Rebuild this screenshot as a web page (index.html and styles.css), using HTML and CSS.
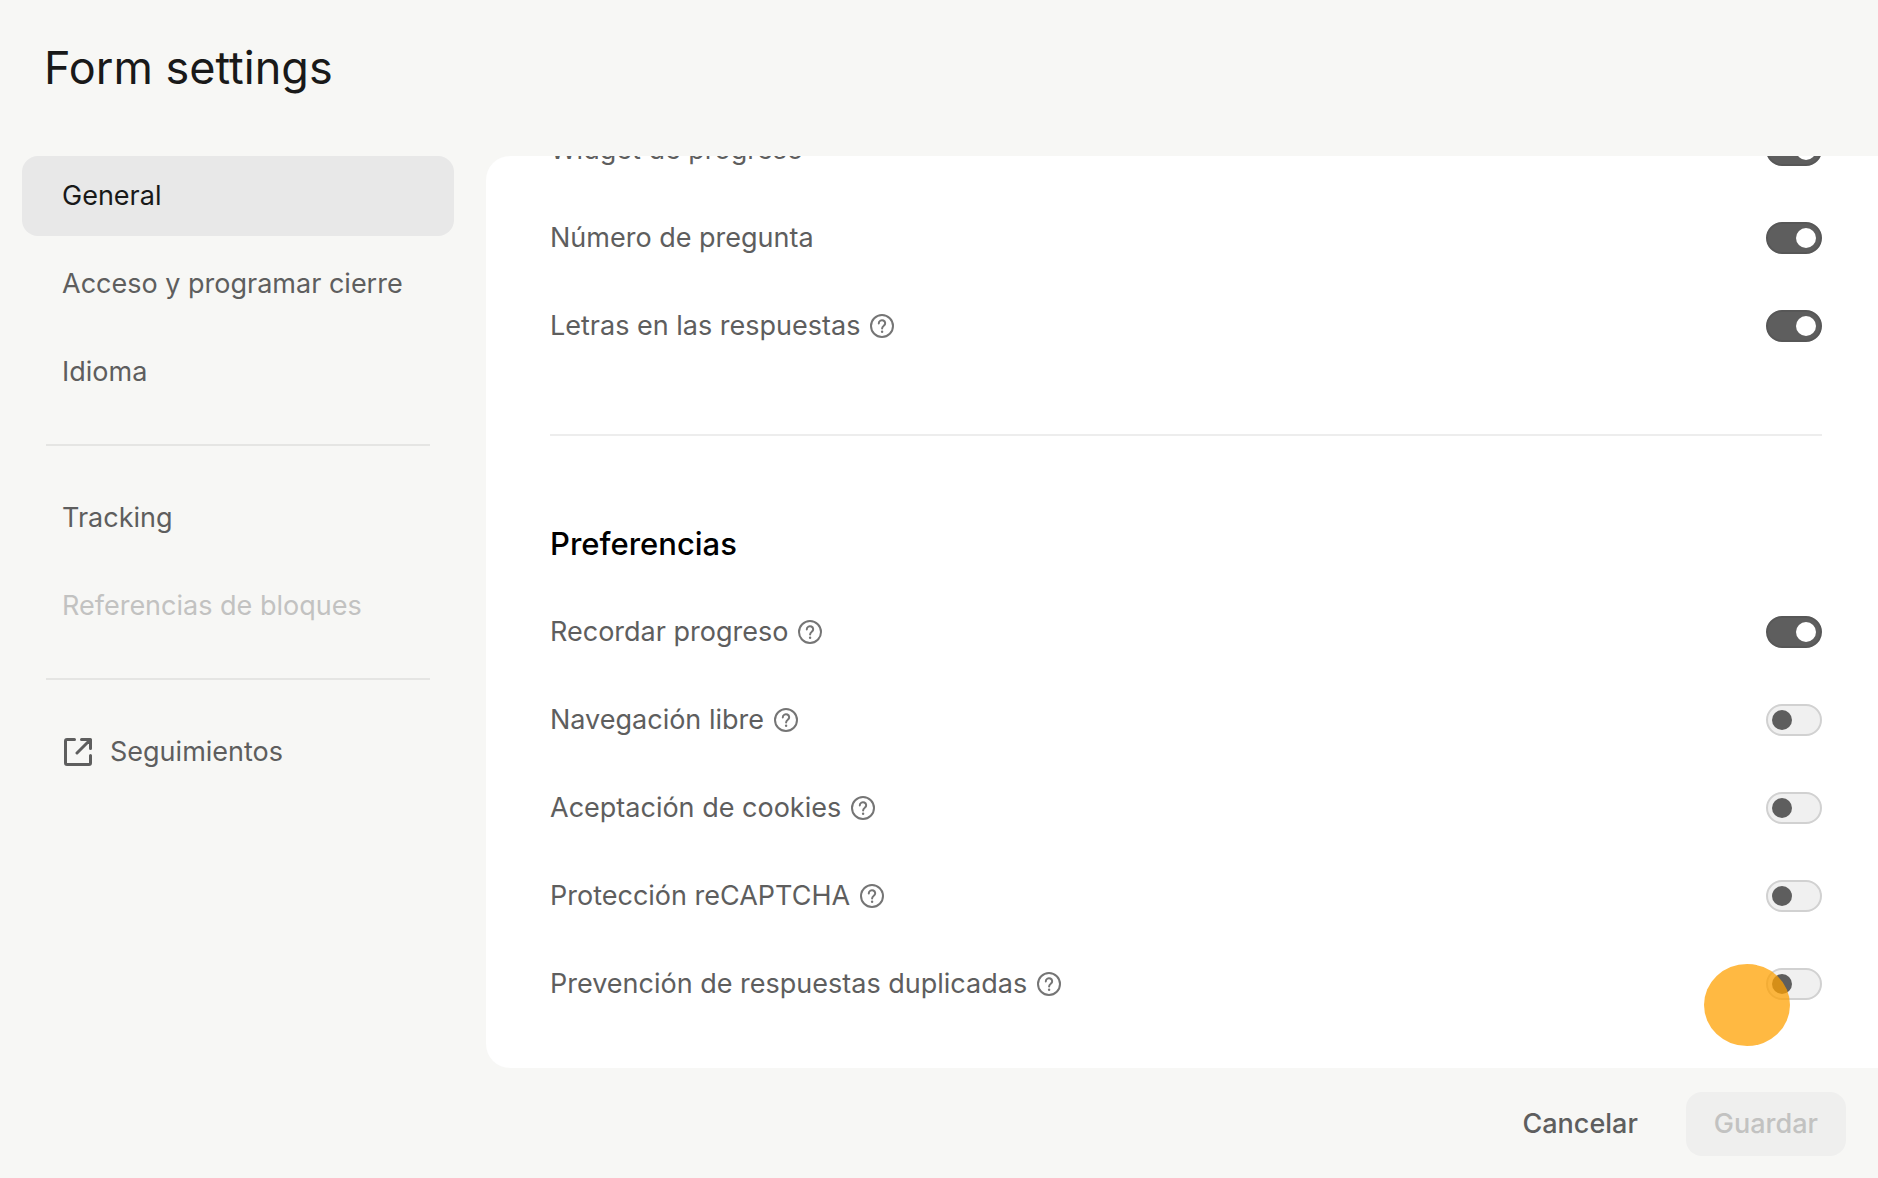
FILE: index.html
```html
<!DOCTYPE html>
<html lang="es">
<head>
    <meta charset="UTF-8">
    <meta name="viewport" content="width=device-width, initial-scale=1.0">
    <title>Form settings</title>
    <link rel="stylesheet" href="styles.css">
</head>
<body>

<!-- shared icons -->
<svg class="sprite" aria-hidden="true">
    <symbol id="icon-help" viewBox="0 0 24 24">
        <circle cx="12" cy="12" r="11" fill="none" stroke="currentColor" stroke-width="2"/>
        <path d="M8.8 9.4a3.2 3 0 1 1 5 2.3c-1.1.8-1.7 1.3-1.7 2.7" fill="none" stroke="currentColor" stroke-width="2" stroke-linecap="round"/>
        <circle cx="12.1" cy="17.7" r="1.2" fill="currentColor"/>
    </symbol>
    <symbol id="icon-external" viewBox="0 0 32 32">
        <path d="M12.500 3.500H5A1.500 1.500 0 0 0 3.500 5v22A1.500 1.500 0 0 0 5 28.500h22a1.500 1.500 0 0 0 1.500-1.500v-7.500M19.500 3.500h9v9M28 4L15 17" fill="none" stroke="currentColor" stroke-width="3" stroke-linecap="round" stroke-linejoin="round"/>
    </symbol>
</svg>

<div class="settings">
    <header class="header">
        <h1 class="title">Form settings</h1>
    </header>

    <div class="body">
        <nav class="sidebar">
            <a href="#general" class="nav-item active">General</a>
            <a href="#acceso" class="nav-item">Acceso y programar cierre</a>
            <a href="#idioma" class="nav-item">Idioma</a>
            <hr class="nav-divider">
            <a href="#tracking" class="nav-item">Tracking</a>
            <a href="#referencias" class="nav-item disabled" aria-disabled="true">Referencias de bloques</a>
            <hr class="nav-divider">
            <a href="#seguimientos" class="nav-item">
                <svg class="nav-icon" aria-hidden="true"><use href="#icon-external"/></svg>
                Seguimientos
            </a>
        </nav>

        <main class="panel">
            <div class="panel-content">
                <div class="row">
                    <label for="widget">Widget de progreso</label>
                    <input type="checkbox" role="switch" class="toggle" id="widget" checked>
                </div>
                <div class="row">
                    <label for="numero">Número de pregunta</label>
                    <input type="checkbox" role="switch" class="toggle" id="numero" checked>
                </div>
                <div class="row">
                    <label for="letras">Letras en las respuestas</label>
                    <button type="button" class="help" aria-label="Ayuda"><svg><use href="#icon-help"/></svg></button>
                    <input type="checkbox" role="switch" class="toggle" id="letras" checked>
                </div>

                <hr class="panel-divider">

                <h2 class="section-title">Preferencias</h2>
                <div class="row">
                    <label for="recordar">Recordar progreso</label>
                    <button type="button" class="help" aria-label="Ayuda"><svg><use href="#icon-help"/></svg></button>
                    <input type="checkbox" role="switch" class="toggle" id="recordar" checked>
                </div>
                <div class="row">
                    <label for="navegacion">Navegación libre</label>
                    <button type="button" class="help" aria-label="Ayuda"><svg><use href="#icon-help"/></svg></button>
                    <input type="checkbox" role="switch" class="toggle" id="navegacion">
                </div>
                <div class="row">
                    <label for="cookies">Aceptación de cookies</label>
                    <button type="button" class="help" aria-label="Ayuda"><svg><use href="#icon-help"/></svg></button>
                    <input type="checkbox" role="switch" class="toggle" id="cookies">
                </div>
                <div class="row">
                    <label for="recaptcha">Protección reCAPTCHA</label>
                    <button type="button" class="help" aria-label="Ayuda"><svg><use href="#icon-help"/></svg></button>
                    <input type="checkbox" role="switch" class="toggle" id="recaptcha">
                </div>
                <div class="row">
                    <label for="duplicadas">Prevención de respuestas duplicadas</label>
                    <button type="button" class="help" aria-label="Ayuda"><svg><use href="#icon-help"/></svg></button>
                    <input type="checkbox" role="switch" class="toggle" id="duplicadas">
                    <span class="pointer"></span>
                </div>
            </div>
        </main>
    </div>

    <footer class="footer">
        <button type="button" class="btn">Cancelar</button>
        <button type="button" class="btn btn-save" disabled>Guardar</button>
    </footer>
</div>

</body>
</html>
```
FILE: styles.css
```css
* { margin: 0; padding: 0; box-sizing: border-box; }

body { background-color: #f7f7f5; color: #5e5e5e; font-family: Inter, "Liberation Sans", sans-serif; font-size: 27px; line-height: 40px; }

button { border: none; background: none; font: inherit; color: inherit; cursor: pointer; }

.sprite { position: absolute; width: 0; height: 0; }

.settings { display: flex; flex-direction: column; height: 100vh; }

.header { padding: 40px 44px 60px; }
.title { font-size: 45px; line-height: 56px; font-weight: 400; color: #191919; }

.body { display: flex; flex: 1; min-height: 0; }

/* Sidebar */
.sidebar { display: flex; flex-direction: column; gap: 8px; width: 486px; flex-shrink: 0; padding: 0 32px 0 22px; }

.nav-item { display: flex; align-items: center; gap: 16px; padding: 20px 40px; border-radius: 16px; color: inherit; text-decoration: none; white-space: nowrap; }
.nav-item.active { background-color: #e8e8e8; color: #191919; }
.nav-item.disabled { color: #c2c2c1; pointer-events: none; }
.nav-icon { width: 32px; height: 32px; }

.nav-divider { height: 2px; margin: 24px; border: none; background-color: #e5e5e3; }

/* Panel, opens scrolled to its last row */
.panel { display: flex; flex-direction: column-reverse; flex: 1; min-width: 0; overflow-y: auto; scrollbar-width: none; background-color: #fff; border-radius: 24px 0 0 24px; }
.panel-content { display: flex; flex-direction: column; gap: 48px; padding: 0 56px 64px 64px; }

.panel-divider { height: 2px; margin: 40px 0; border: none; background-color: #ededed; }
.section-title { font-size: 31px; line-height: 40px; font-weight: 500; color: #000; }

.row { display: flex; align-items: center; gap: 10px; position: relative; }

.help { display: flex; color: #757575; }
.help svg { width: 24px; height: 24px; }

.toggle { appearance: none; display: flex; width: 56px; height: 32px; margin-left: auto; padding: 4px; border: 2px solid #d1d1d1; border-radius: 16px; background-color: #f0f0f0; cursor: pointer; }
.toggle::before { content: ""; width: 20px; height: 20px; border-radius: 50%; background-color: #5e5e5e; }
.toggle:checked { justify-content: flex-end; background-color: #5e5e5e; border-color: #575757; }
.toggle:checked::before { background-color: #fff; }

/* click highlight over the last toggle */
.pointer { position: absolute; top: 0; right: 32px; width: 86px; height: 82px; border-radius: 50%; background-color: rgba(255, 160, 0, 0.74); pointer-events: none; }

/* Footer */
.footer { display: flex; justify-content: flex-end; gap: 20px; padding: 24px 32px 22px; }
.btn { height: 64px; padding: 0 28px; border-radius: 16px; font-weight: 500; }
.btn-save { background-color: #efefee; color: #c2c2c1; cursor: default; }
```
